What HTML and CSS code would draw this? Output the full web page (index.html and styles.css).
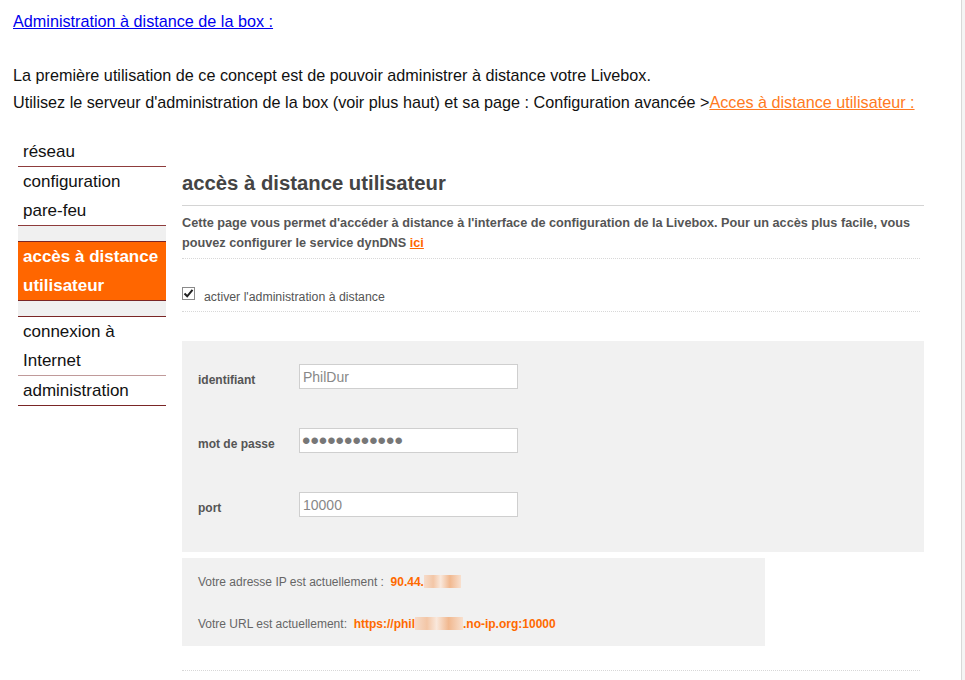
FILE: index.html
```html
<!DOCTYPE html>
<html lang="fr">

<head>
    <meta charset="UTF-8">
    <meta name="viewport" content="width=device-width, initial-scale=1.0">
    <title>Administration à distance de la box</title>
    <link rel="stylesheet" href="styles.css">
</head>

<body>
    <div class="page">
        <p class="titre"><a href="#" class="lien-bleu">Administration à distance de la box :</a></p>

        <p>La première utilisation de ce concept est de pouvoir administrer à distance votre Livebox.</p>
        <p>Utilisez le serveur d'administration de la box (voir plus haut) et sa page : Configuration avancée &gt;<a href="#" class="lien-orange">Acces à distance utilisateur :</a></p>

        <!-- capture de l'interface Livebox -->
        <div class="livebox">
            <ul class="menu">
                <li class="trait">réseau</li>
                <li>configuration</li>
                <li class="trait">pare-feu</li>
                <li class="vide fonce"></li>
                <li class="actif fonce">accès à distance utilisateur</li>
                <li class="vide fonce"></li>
                <li class="trait clair">connexion à Internet</li>
                <li class="trait fonce">administration</li>
            </ul>

            <div class="contenu">
                <h2>accès à distance utilisateur</h2>
                <p class="intro">Cette page vous permet d'accéder à distance à l'interface de configuration de la Livebox. Pour un accès plus facile, vous pouvez configurer le service dynDNS <a href="#">ici</a></p>

                <div class="option">
                    <span class="case">
                        <svg width="11" height="11" viewBox="0 0 11 11"><path d="M1.5 5.5 L4.2 8.3 L9.5 1.8" fill="none" stroke="#222" stroke-width="2"/></svg>
                    </span>
                    <label>activer l'administration à distance</label>
                </div>

                <div class="formulaire">
                    <div class="ligne">
                        <label>identifiant</label>
                        <input type="text" value="PhilDur">
                    </div>
                    <div class="ligne">
                        <label>mot de passe</label>
                        <input type="password" value="motdepasse12" class="mdp">
                    </div>
                    <div class="ligne">
                        <label>port</label>
                        <input type="text" value="10000">
                    </div>
                </div>

                <div class="infos">
                    <p>Votre adresse IP est actuellement : &nbsp;<b>90.44.<span class="flou ip"></span></b></p>
                    <p>Votre URL est actuellement: &nbsp;<b>https://phil<span class="flou url"></span>.no-ip.org:10000</b></p>
                </div>

                <div class="fin"></div>
            </div>
        </div>
    </div>
</body>

</html>
```

FILE: styles.css
```css
html {
    background-color: #f4f4f4;
}

body {
    margin: 0;
    font-family: "Liberation Sans", Arial, sans-serif;
    font-size: 16.2px;
    color: #111;
}

.page {
    width: 962px;
    min-height: 100vh;
    padding: 8px 0 0 13px;
    box-sizing: border-box;
    background-color: #fff;
    border-right: 1px solid #d8d8d8;
}

.page > p {
    margin: 0;
    line-height: 27px;
}

.page > p.titre {
    margin-bottom: 27px;
}

.lien-bleu {
    color: #0000ee;
}

.lien-orange {
    color: #ff7a22;
}

/* Capture Livebox */
.livebox {
    display: flex;
    margin-top: 21px;
    padding-left: 5px;
}

.menu {
    list-style: none;
    margin: 0;
    padding: 0;
    width: 148px;
    flex-shrink: 0;
}

.menu li {
    font-size: 17px;
    line-height: 29px;
    padding-left: 5px;
    color: #111;
}

.menu li.trait {
    border-bottom: 1px solid #8e3c3c;
}

.menu li.clair {
    border-bottom-color: #c09a9a;
}

.menu li.fonce {
    border-bottom: 1px solid #7a2626;
}

.menu li.vide {
    height: 15px;
    background-color: #f0f0f0;
}

.menu li.actif {
    background-color: #ff6600;
    color: #fff;
    font-weight: bold;
}

.contenu {
    margin-left: 16px;
    width: 742px;
    color: #555;
}

.contenu h2 {
    margin: 34px 0 0;
    font-size: 20.3px;
    line-height: 24px;
    color: #444;
    padding-bottom: 10px;
    border-bottom: 1px solid #d4d4d4;
}

.intro {
    margin: 7px 0 0;
    font-size: 12.7px;
    font-weight: bold;
    line-height: 20px;
    padding-bottom: 5px;
    border-bottom: 1px dotted #d8d8d8;
    width: 738px;
}

.intro a {
    color: #ff6600;
}

.option {
    display: flex;
    align-items: flex-start;
    padding: 30px 0 6px;
    border-bottom: 1px dotted #d8d8d8;
    width: 738px;
    font-size: 12.3px;
    line-height: 16px;
}

.case {
    display: flex;
    align-items: center;
    justify-content: center;
    width: 11px;
    height: 11px;
    margin-top: -2px;
    border: 1px solid #8a8a8a;
    background-color: #fff;
}

.option label {
    margin-left: 9px;
}

.formulaire {
    margin-top: 29px;
    background-color: #f1f1f1;
    padding: 0 0 35px 16px;
}

.ligne {
    display: flex;
    align-items: flex-end;
    padding-top: 23px;
}

.ligne + .ligne {
    padding-top: 39px;
}

.ligne label {
    width: 101px;
    font-size: 12px;
    font-weight: bold;
    line-height: 14px;
    margin-bottom: 2px;
    color: #555;
}

.ligne input {
    width: 219px;
    height: 25px;
    box-sizing: border-box;
    border: 1px solid #cfcfcf;
    background-color: #fff;
    font-family: "Liberation Sans", Arial, sans-serif;
    font-size: 14px;
    color: #888;
    padding: 0 3px;
    margin: 0;
}

.ligne input.mdp {
    color: #777;
    font-size: 24px;
    padding: 0 2px;
}

.infos {
    margin-top: 6px;
    width: 583px;
    box-sizing: border-box;
    background-color: #f1f1f1;
    padding: 16px 16px 14px;
    font-size: 12px;
    color: #666;
}

.infos p {
    margin: 0;
    line-height: 16px;
}

.infos p + p {
    margin-top: 26px;
}

.infos b {
    color: #ff6a00;
}

.flou {
    display: inline-block;
    height: 13px;
    vertical-align: -2px;
    background: linear-gradient(90deg, #f6dccb 0, #f3c6a6 25%, #f9e8dc 45%, #f1b88f 70%, #f8e0cf 100%);
}

.flou.ip {
    width: 37px;
}

.flou.url {
    width: 48px;
}

.fin {
    margin-top: 24px;
    width: 738px;
    border-bottom: 1px dotted #d8d8d8;
}
```
